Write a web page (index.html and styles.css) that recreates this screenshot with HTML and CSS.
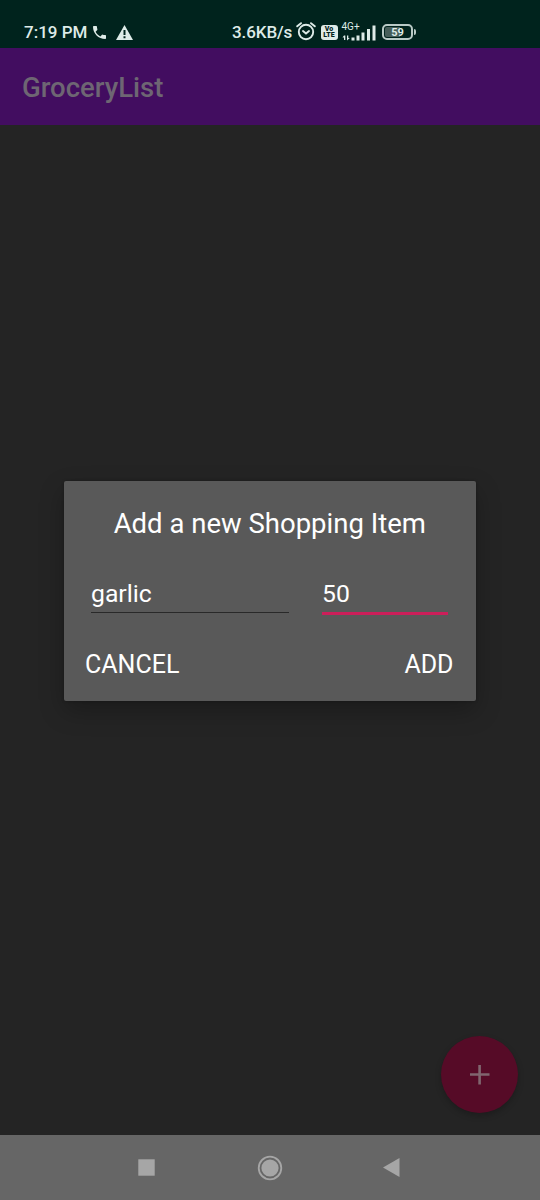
FILE: index.html
```html
<!DOCTYPE html>
<html lang="en">
<head>
<meta charset="utf-8">
<title>GroceryList</title>
<link rel="stylesheet" href="styles.css">
</head>
<body>
<div class="screen">
  <header class="status">
    <div class="status-left">
      <span class="clock">7:19 PM</span>
      <svg class="phone" width="13" height="13" viewBox="3 3 18 18"><path d="M6.6 10.8c1.4 2.8 3.8 5.1 6.6 6.6l2.200-2.200c.3-.3.7-.4 1-.2 1.100.4 2.300.6 3.600.6.6 0 1 .4 1 1V20c0 .6-.4 1-1 1C10.600 21 3 13.400 3 4c0-.6.5-1 1-1h3.500c.6 0 1 .4 1 1 0 1.200.2 2.500.6 3.600.1.3 0 .7-.2 1z"/></svg>
      <svg class="warning" width="17" height="15" viewBox="0 0 17 15"><path fill-rule="evenodd" d="M8.500 0 17 15H0ZM7.500 5v5h2V5Zm0 6.300v2h2v-2Z"/></svg>
    </div>
    <div class="status-right">
      <span class="speed">3.6KB/s</span>
      <svg class="alarm" width="20" height="19" viewBox="0 0 20 19" fill="none" stroke-width="1.900" stroke-linecap="round"><circle cx="10" cy="10" r="7.200"/><path d="M1.200 4.300 5 1.200M15 1.200l3.800 3.100M7 9l3 2.500L13 9"/></svg>
      <span class="volte"><span>Vo</span><span>LTE</span></span>
      <div class="network">
        <span class="generation">4G+</span>
        <svg width="34" height="17" viewBox="0 0 34 17"><path d="M2 11.500h1.300V16H2v-2.500H.5zM5 11.500h1.300V14h1.500L5 16.500zM9.500 13.500h3v3h-3zM14.500 11.500h3v5h-3zM19.500 8.500h3v8h-3zM25 5h3v11.500h-3zM30.500 1.500h3v15h-3z"/></svg>
      </div>
      <div class="battery"><span>59</span></div>
    </div>
  </header>
  <div class="appbar"><h1>GroceryList</h1></div>
  <main class="content">
    <section class="dialog" role="dialog">
      <h2>Add a new Shopping Item</h2>
      <div class="fields">
        <div class="field name">garlic</div>
        <div class="field amount">50</div>
      </div>
      <div class="actions">
        <span class="cancel">CANCEL</span>
        <span class="add">ADD</span>
      </div>
    </section>
    <div class="fab"><svg width="20" height="20" viewBox="0 0 20 20"><path d="M8.300 0h2.600v8.200H19.500v2.600h-8.600V19.500H8.300v-8.700H0V8.200h8.300z"/></svg></div>
  </main>
  <nav class="navbar">
    <svg width="17" height="17" viewBox="0 0 17 17"><path d="M.3.3h16.400v16.400H.3z"/></svg>
    <svg width="26" height="26" viewBox="0 0 26 26"><circle cx="13" cy="13" r="8.600"/><circle class="ring" cx="13" cy="13" r="11.300"/></svg>
    <svg width="17" height="19" viewBox="0 0 17 19"><path d="M16.500 0v19L0 9.500z"/></svg>
  </nav>
</div>
</body>
</html>
```

FILE: styles.css
```css
* { box-sizing: border-box; }

body {
  margin: 0;
  background: #242424;
  font-family: Roboto, sans-serif;
  color: #fff;
}

svg { display: block; flex: none; }
h1, h2 { margin: 0; }

.screen {
  width: 540px;
  height: 1200px;
  display: flex;
  flex-direction: column;
}

.status {
  flex: none;
  height: 48px;
  padding: 17px 0 0 24px;
  display: grid;
  grid-template-columns: 208px 1fr;
  background: #00231d;
  color: #deebe8;
  fill: #deebe8;
}

.status-left, .status-right {
  display: flex;
  align-items: center;
  height: 31px;
  white-space: nowrap;
}

.clock, .speed { font-size: 17px; font-weight: 500; line-height: 31px; }
.clock { width: 69px; }
.speed { width: 64px; letter-spacing: -.1px; }
.phone { margin-right: 10px; }
.warning { margin-bottom: 1px; }
.alarm { stroke: #deebe8; margin-bottom: 2px; }

.volte {
  width: 17px;
  height: 15px;
  margin-left: 4.500px;
  margin-bottom: 1px;
  border-radius: 3px;
  display: flex;
  flex-direction: column;
  align-items: center;
  justify-content: center;
  background: #deebe8;
  color: #00231d;
  font-size: 7px;
  font-weight: 900;
  line-height: 6.500px;
}

.network {
  width: 34px;
  height: 17px;
  margin-left: 4px;
  margin-bottom: 1px;
  position: relative;
}

.generation {
  position: absolute;
  left: 0;
  top: -3px;
  font-size: 10px;
  line-height: 11px;
}

.battery {
  width: 31px;
  height: 16px;
  margin-left: 6.500px;
  margin-bottom: 1px;
  border: 2px solid #b9cac6;
  border-radius: 5px;
  position: relative;
  background: linear-gradient(90deg, #465e59 60%, #00231d 60%);
  background-clip: content-box;
  padding: 1px;
  font-size: 11px;
  font-weight: 700;
  line-height: 11px;
  text-align: center;
}

.battery::after {
  content: "";
  position: absolute;
  right: -5px;
  top: 3px;
  width: 2px;
  height: 6px;
  border-radius: 0 2px 2px 0;
  background: #b9cac6;
}

.appbar {
  flex: none;
  height: 76.500px;
  padding-left: 22px;
  background: #420d60;
}

.appbar h1 {
  color: #6e6673;
  font-size: 27.500px;
  font-weight: 500;
  line-height: 80px;
}

.content {
  height: 1010.500px;
  padding: 356.500px 22px 0 63.500px;
  display: flex;
  flex-direction: column;
}

.dialog {
  width: 412.500px;
  height: 220px;
  border-radius: 2px;
  background: #595959;
  box-shadow: 0 10px 24px rgba(0, 0, 0, .25), 0 0 3px rgba(0, 0, 0, .3);
}

.dialog h2 {
  padding-top: 23px;
  font-size: 27.500px;
  font-weight: 400;
  line-height: 40px;
  text-align: center;
}

.fields {
  display: flex;
  justify-content: space-between;
  padding: 29px 28px 0 27.500px;
}

.field {
  height: 42px;
  padding-top: 1px;
  font-size: 24.750px;
  line-height: 40px;
}

.name { width: 198px; height: 40px; border-bottom: 1px solid #292929; }
.amount { width: 126px; border-bottom: 3px solid #cc1f5a; }

.actions {
  display: flex;
  justify-content: space-between;
  padding: 30px 22.500px 0 21.500px;
  font-size: 25px;
  line-height: 40px;
}

.fab {
  width: 77px;
  height: 77px;
  margin: auto 0 22px auto;
  border-radius: 50%;
  display: grid;
  place-items: center;
  background: #560b27;
  fill: #80666f;
  box-shadow: 0 3px 6px rgba(0, 0, 0, .22);
}

.navbar {
  flex: none;
  height: 65px;
  padding: 0 140px 0 138px;
  display: grid;
  grid-template-columns: 119px 126px 17px;
  align-items: center;
  background: #666;
  fill: #a6a6a6;
}

.ring { fill: none; stroke: #a6a6a6; stroke-width: 1.800; }
```
